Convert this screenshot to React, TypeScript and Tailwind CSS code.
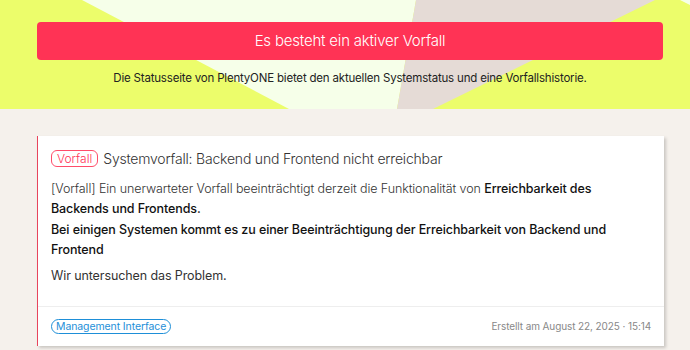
import React from "react";

const HeaderBackground = () => (
  <svg
    className="absolute inset-0 h-full w-full"
    viewBox="0 0 690 109"
    preserveAspectRatio="none"
  >
    <polygon points="82,0 416,0 397,109 289,109" fill="#f6ffe9" />
    <polygon points="416,0 655,0 433,109 397,109" fill="#e5dbd6" />
    <polygon points="680,0 690,0 690,5" fill="#f6ffe9" />
  </svg>
);

export default function App() {
  return (
    <div
      className="h-screen overflow-hidden bg-[#f5f1ec] text-[#2b2b2b]"
      style={{ fontFamily: "Inter, 'Noto Sans', sans-serif" }}
    >
      {/* Hero */}
      <header className="relative h-[109px] overflow-hidden bg-[#ecfd6b]">
        <HeaderBackground />
        <div className="relative pl-[37px] pr-[27px] pt-[22px]">
          <div className="flex h-[38px] items-center justify-center rounded-[4px] bg-[#ff3355] text-[15px] font-light tracking-[-0.2px] text-white">
            Es besteht ein aktiver Vorfall
          </div>
          <p className="mt-[10px] text-center text-[11.5px] tracking-[-0.19px] text-[#222]">
            Die Statusseite von PlentyONE bietet den aktuellen Systemstatus und
            eine Vorfallshistorie.
          </p>
        </div>
      </header>

      {/* Incident */}
      <main className="pl-[37px] pr-[26px] pt-[27px]">
        <div className="border-l border-[#e8455c] bg-white shadow-[2px_2px_3px_rgba(0,0,0,0.18)]">
          <div className="px-[13px] pt-[12px] pb-[20px]">
            <div className="flex items-center gap-[5px]">
              <span className="rounded-[6px] border border-[#ff4d6a] px-[5px] text-[12px] leading-[15px] font-light text-[#ff3355]">
                Vorfall
              </span>
              <h2 className="text-[14px] font-light tracking-[-0.2px] text-[#333]">
                Systemvorfall: Backend und Frontend nicht erreichbar
              </h2>
            </div>
            <div className="mt-[10px] text-[12.5px] leading-[20px] tracking-[-0.1px] text-[#111]">
              <p>
                <span className="font-light text-[#333]">
                  [Vorfall] Ein unerwarteter Vorfall beeinträchtigt derzeit die
                  Funktionalität von{" "}
                </span>
                <span className="font-medium">
                  Erreichbarkeit des Backends und Frontends.
                </span>
              </p>
              <p className="mt-[1px] font-medium">
                Bei einigen Systemen kommt es zu einer Beeinträchtigung der
                Erreichbarkeit von Backend und Frontend
              </p>
              <p className="mt-[6px] text-[#333]">Wir untersuchen das Problem.</p>
            </div>
          </div>
          <div className="flex items-center justify-between border-t border-[#eeeeee] px-[13px] py-[12px]">
            <span className="rounded-full border border-[#1e8fd8] px-[4px] text-[10.5px] leading-[13px] tracking-[-0.1px] text-[#1e8fd8]">
              Management Interface
            </span>
            <span className="text-[10px] tracking-[-0.1px] text-[#888]">
              Erstellt am August 22, 2025 · 15:14
            </span>
          </div>
        </div>
      </main>
    </div>
  );
}
